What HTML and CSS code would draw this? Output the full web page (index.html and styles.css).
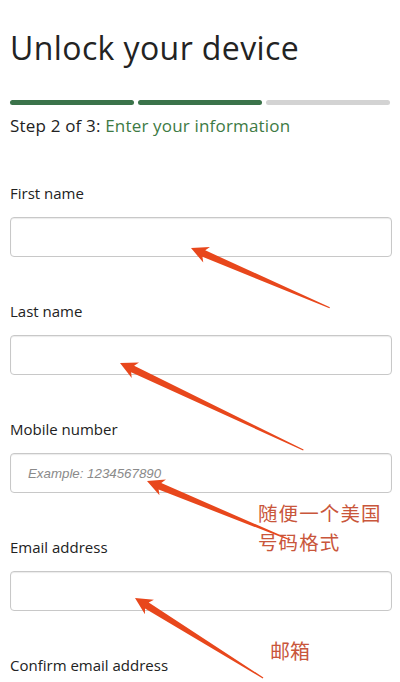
FILE: index.html
```html
<!DOCTYPE html>
<html lang="en">
<head>
<meta charset="utf-8">
<title>Unlock your device</title>
<link rel="stylesheet" href="styles.css">
</head>
<body>
<main class="page">
  <h1 class="title">Unlock your device</h1>
  <div class="progress">
    <span class="seg done"></span>
    <span class="seg done"></span>
    <span class="seg"></span>
  </div>
  <p class="step">Step 2 of 3: <span class="step-name">Enter your information</span></p>

  <form class="form">
    <div class="field">
      <label class="label" for="fn">First name</label>
      <input class="input" id="fn" type="text">
    </div>
    <div class="field">
      <label class="label" for="ln">Last name</label>
      <input class="input" id="ln" type="text">
    </div>
    <div class="field">
      <label class="label" for="mn">Mobile number</label>
      <input class="input" id="mn" type="text" placeholder="Example: 1234567890">
    </div>
    <div class="field">
      <label class="label" for="em">Email address</label>
      <input class="input" id="em" type="text">
    </div>
    <div class="field">
      <label class="label">Confirm email address</label>
    </div>
  </form>
</main>

<svg class="annotations" width="400" height="682" viewBox="0 0 400 682" aria-hidden="true">
  <g class="arrow" transform="translate(191 248) rotate(23.3)">
    <polygon points="0,0 17,-8.5 14,-3.5 151,-0.6 151,0.6 14,3.5 17,8.5"/>
  </g>
  <g class="arrow" transform="translate(120 363) rotate(25.4)">
    <polygon points="0,0 17,-8.5 14,-3.5 203,-0.6 203,0.6 14,3.5 17,8.5"/>
  </g>
  <g class="arrow" transform="translate(147 481) rotate(22.4)">
    <polygon points="0,0 17,-8.5 14,-3.5 155,-0.6 155,0.6 14,3.5 17,8.5"/>
  </g>
  <g class="arrow" transform="translate(135 598) rotate(32)">
    <polygon points="0,0 17,-8.5 14,-3.5 151,-0.6 151,0.6 14,3.5 17,8.5"/>
  </g>
</svg>
<div class="note note-phone">
  <div class="note-line">随便一个美国</div>
  <div class="note-line">号码格式</div>
</div>
<div class="note note-email">邮箱</div>
</body>
</html>
```

FILE: styles.css
```css
* { box-sizing: border-box; }

html, body {
  margin: 0;
  padding: 0;
  background: #ffffff;
}

body {
  font-family: "Open Sans", "Noto Sans", sans-serif;
  color: #222222;
  width: 400px;
  height: 682px;
  overflow: hidden;
  position: relative;
}

.page {
  padding: 28px 10px 0 10px;
}

.title {
  margin: 0;
  font-size: 32px;
  line-height: 40px;
  font-weight: 400;
  letter-spacing: 0.4px;
  color: #232323;
}

.progress {
  margin-top: 32px;
  display: flex;
  gap: 4px;
  width: 380px;
}

.seg {
  flex: 1;
  height: 5px;
  border-radius: 3px;
  background: #d3d3d3;
}

.seg.done {
  background: #3b734a;
}

.step {
  margin: 9px 0 0 0;
  font-size: 17px;
  line-height: 24px;
  letter-spacing: 0.18px;
  color: #222222;
}

.step-name {
  color: #3d7a44;
}

.form {
  margin-top: 45px;
  display: flex;
  flex-direction: column;
  gap: 44px;
}

.field {
  display: flex;
  flex-direction: column;
  gap: 14px;
}

.label {
  font-size: 15px;
  line-height: 20px;
  color: #222222;
}

.input {
  width: 382px;
  height: 40px;
  margin: 0;
  border: 1px solid #c8c8c8;
  border-radius: 4px;
  background: #ffffff;
  padding: 0 17px;
  font-family: "Liberation Sans", Arial, sans-serif;
  font-size: 13.3px;
  box-shadow: inset 0 1px 1px rgba(0,0,0,0.08);
}

.input::placeholder {
  color: #8a8a8a;
  font-style: italic;
}

.annotations {
  position: absolute;
  left: 0;
  top: 0;
  pointer-events: none;
}

.arrow polygon {
  fill: #e8471c;
}

.note {
  position: absolute;
  font-family: "Noto Sans CJK SC", sans-serif;
  color: #c9563b;
}

.note-phone {
  left: 258px;
  top: 499px;
  display: flex;
  flex-direction: column;
  font-size: 19.5px;
  letter-spacing: 1.1px;
  line-height: 28.5px;
}

.note-email {
  left: 270px;
  top: 637px;
  font-size: 20px;
  line-height: 28px;
}
```
